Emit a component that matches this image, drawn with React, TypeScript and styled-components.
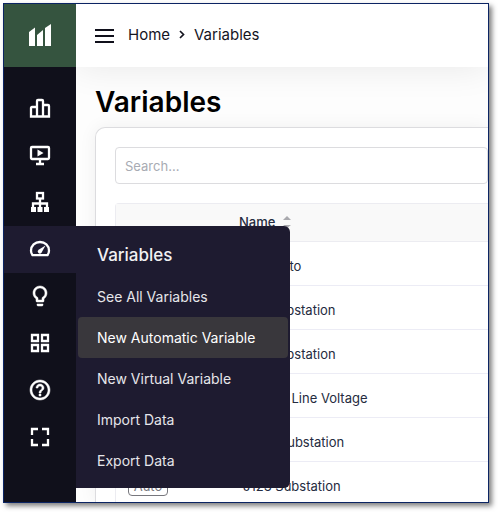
import React from "react";
import styled, { createGlobalStyle, css } from "styled-components";
import { MdHelpOutline, MdLightbulbOutline } from "react-icons/md";

const GlobalStyle = createGlobalStyle`
  *, *::before, *::after { box-sizing: border-box; }
  body { margin: 0; background: #fff; font-family: Inter, "Liberation Sans", sans-serif; }
`;

const Page = styled.div`
  height: 100vh;
  padding: 3px 9px 9px 3px;
  overflow: hidden;
`;

const Frame = styled.div`
  display: flex;
  height: 100%;
  border: 1px solid #0b2463;
  box-shadow: 3px 3px 5px rgba(0, 0, 0, 0.5);
  background: #fdfdfd;
`;

const Sidebar = styled.aside`
  position: relative;
  z-index: 2;
  flex: 0 0 72px;
  background: #10101b;
`;

const Logo = styled.a`
  display: flex;
  align-items: center;
  justify-content: center;
  height: 63px;
  margin-bottom: 18px;
  background: #35543f;
`;

const NavItem = styled.div`
  position: relative;
`;

const NavButton = styled.button<{ $active?: boolean }>`
  display: flex;
  align-items: center;
  justify-content: center;
  width: 100%;
  height: 47px;
  padding: 0 1px 2px 0;
  border: 0;
  color: #fff;
  background: ${(p) => (p.$active ? "#1e1b30" : "transparent")};
  cursor: pointer;

  svg { display: block; width: 24px; height: 24px; stroke-width: 0.5; }
  svg > path[fill="none"] { stroke: none; }
`;

const Menu = styled.div`
  position: absolute;
  top: 0;
  left: 100%;
  width: 214px;
  padding: 0 2px 7px;
  border-radius: 0 6px 6px 0;
  background: #1e1b30;
`;

const MenuTitle = styled.h2`
  margin: 0;
  padding: 17px 19px 9px;
  font-size: 17px;
  line-height: 24px;
  font-weight: 500;
  color: #f1f1f3;
`;

const MenuLink = styled.a<{ $active?: boolean }>`
  display: block;
  padding: 0 19px;
  border-radius: 4px;
  font-size: 14px;
  line-height: 41px;
  color: #e6e6ea;
  text-decoration: none;
  white-space: nowrap;
  ${(p) => p.$active && css`
    background: #39373c;
    color: #fff;
  `}
`;

const Content = styled.div`
  display: flex;
  flex-direction: column;
  flex: 1;
  min-width: 0;
  overflow: hidden;
`;

const Header = styled.header`
  position: relative;
  display: flex;
  align-items: center;
  flex: 0 0 63px;
  padding-left: 19px;
  gap: 14px;
  background: #fff;
  box-shadow: 0 0 36px rgba(0, 0, 0, 0.09);
`;

const MenuToggle = styled.button`
  padding: 0;
  border: 0;
  background: none;
  color: #10101b;
  cursor: pointer;

  svg { display: block; }
`;

const Breadcrumb = styled.nav`
  display: flex;
  align-items: center;
  gap: 8px;
  padding-bottom: 2px;
  font-size: 15px;
  line-height: 20px;
  color: #14141f;

  a { color: inherit; text-decoration: none; }
`;

const Main = styled.main`
  display: flex;
  flex-direction: column;
  flex: 1;
  min-height: 0;
  padding: 17px 0 0 19px;
`;

const Title = styled.h1`
  margin: 0 0 7px;
  font-size: 28px;
  line-height: 36px;
  font-weight: 600;
  color: #000;
`;

const Card = styled.section`
  flex: 1;
  min-height: 0;
  padding: 19px 0 0 19px;
  border: solid #dcdcdf;
  border-width: 1px 0 0 1px;
  border-top-left-radius: 10px;
  background: #fff;
  box-shadow: 0 0 18px rgba(0, 0, 0, 0.06);
`;

const Search = styled.input`
  display: block;
  width: 100%;
  height: 37px;
  margin: 0 0 19px;
  padding: 0 9px;
  border: 1px solid #dcdcdf;
  border-radius: 4px;
  font: 13px/20px Inter, "Liberation Sans", sans-serif;
  background: #fff;

  &::placeholder { color: #a8abb3; opacity: 1; }
`;

const Table = styled.table`
  width: 100%;
  border: solid #ececf1;
  border-width: 1px 0 0 1px;
  border-top-left-radius: 4px;
  border-collapse: separate;
  border-spacing: 0;
  table-layout: fixed;
  font-size: 13px;
  line-height: 20px;
  color: #252b40;
`;

const HeadCell = styled.th<{ $narrow?: boolean }>`
  width: ${(p) => (p.$narrow ? "115px" : "auto")};
  height: 38px;
  padding: 0 8px 2px;
  border-bottom: 1px solid #ececf1;
  background: #f9f9f9;
  font-weight: 500;
  text-align: left;
`;

const SortButton = styled.button`
  display: flex;
  align-items: center;
  gap: 8px;
  padding: 0;
  border: 0;
  background: none;
  font: inherit;
  color: inherit;
  cursor: pointer;
`;

const Cell = styled.td`
  height: 44px;
  padding: 4px 12px 0;
  border-bottom: 1px solid #ececf5;
  white-space: nowrap;
`;

const Badge = styled.span`
  display: block;
  width: 40px;
  border: 1px solid #77777d;
  border-radius: 4px;
  font-size: 13px;
  line-height: 18px;
  text-align: center;
  color: #77777d;
`;

const Drawing = styled.svg`
  && { stroke-width: 2.3; }
`;

const Icon = ({ children }: { children: React.ReactNode }) => (
  <Drawing viewBox="0 0 24 24" fill="none" stroke="currentColor" aria-hidden="true">
    {children}
  </Drawing>
);

const navItems = [
  {
    label: "Dashboards",
    icon: (
      <Icon>
        <path d="M9 20.5V5Q9 4 10 4h4Q15 4 15 5v15.500M9 11H4Q3 11 3 12v8.500h18V10Q21 9 20 9H15" />
      </Icon>
    ),
  },
  {
    label: "Presentations",
    icon: (
      <Icon>
        <rect x="3" y="4" width="18" height="12" rx="1" />
        <path d="M12 16v5M8 21h8" />
        <path d="M9.500 6.500v7L15.500 10z" fill="currentColor" stroke="none" />
      </Icon>
    ),
  },
  {
    label: "Organizations",
    icon: (
      <Icon>
        <rect x="9" y="3" width="6" height="5.500" />
        <path d="M12 8.500V18M5 18v-4.500h14V18" />
        <path d="M3 17h5v5H3zM9.500 17h5v5h-5zM16 17h5v5h-5z" fill="currentColor" stroke="none" />
      </Icon>
    ),
  },
  {
    label: "Variables",
    icon: (
      <Icon>
        <path d="M4.500 18.200Q3 16 3 13.700C3 8.600 7 5 12 5s9 3.600 9 8.700q0 2.300-1.500 4.500z" strokeLinejoin="round" />
        <path d="M17.500 8.500l-4 7.300a2.100 2.100 0 1 1-2.900-3z" fill="currentColor" stroke="none" />
      </Icon>
    ),
  },
  { label: "Insights", icon: <MdLightbulbOutline /> },
  {
    label: "Applications",
    icon: (
      <Icon>
        <path d="M4 4h6v6H4zM14 4h6v6h-6zM4 14h6v6H4zM14 14h6v6h-6z" />
      </Icon>
    ),
  },
  { label: "Help", icon: <MdHelpOutline /> },
  {
    label: "Full screen",
    icon: (
      <Icon>
        <path d="M4 10V4h6M14 4h6v6M20 14v6h-6M10 20H4v-6" />
      </Icon>
    ),
  },
];

const menuLinks = ["See All Variables", "New Automatic Variable", "New Virtual Variable", "Import Data", "Export Data"];

const rows = ["Test Auto", "J20 Substation", "J30 Substation", "J121 L2 Line Voltage", "J400 Substation", "J123 Substation"];

export default function App() {
  return (
    <Page>
      <GlobalStyle />
      <Frame>
        <Sidebar>
          <Logo href="#" aria-label="Main page">
            <svg width="24" height="24" viewBox="0 0 24 24" fill="#fff" aria-hidden="true">
              <path d="M1 8l6-4.500V22H1zM9 11l6-5v16H9zM17 4l6-4v22h-6z" />
            </svg>
          </Logo>
          {navItems.map(({ label, icon }) => (
            <NavItem key={label}>
              <NavButton aria-label={label} $active={label === "Variables"}>{icon}</NavButton>
              {label === "Variables" && (
                <Menu>
                  <MenuTitle>Variables</MenuTitle>
                  {menuLinks.map((link) => (
                    <MenuLink key={link} href="#" $active={link === "New Automatic Variable"}>{link}</MenuLink>
                  ))}
                </Menu>
              )}
            </NavItem>
          ))}
        </Sidebar>
        <Content>
          <Header>
            <MenuToggle aria-label="Toggle menu">
              <svg width="19" height="14" viewBox="0 0 19 14" fill="currentColor">
                <path d="M0 0h19v2H0zM0 6h19v2H0zM0 12h19v2H0z" />
              </svg>
            </MenuToggle>
            <Breadcrumb aria-label="Breadcrumb">
              <a href="#">Home</a>
              <svg width="8" height="10" viewBox="0 0 8 10" fill="none" stroke="currentColor" strokeWidth="1.700" aria-hidden="true">
                <path d="M2 1l3.500 3.500L2 8" />
              </svg>
              <span>Variables</span>
            </Breadcrumb>
          </Header>
          <Main>
            <Title>Variables</Title>
            <Card>
              <Search type="search" placeholder="Search..." aria-label="Search variables" />
              <Table>
                <thead>
                  <tr>
                    <HeadCell $narrow aria-label="Type" />
                    <HeadCell>
                      <SortButton>
                        Name
                        <svg width="8" height="12" viewBox="0 0 8 12" fill="#a9a9ae" aria-hidden="true">
                          <path d="M0 4l4-4 4 4zM0 9h8l-4 3z" />
                        </svg>
                      </SortButton>
                    </HeadCell>
                  </tr>
                </thead>
                <tbody>
                  {rows.map((name) => (
                    <tr key={name}>
                      <Cell><Badge>Auto</Badge></Cell>
                      <Cell>{name}</Cell>
                    </tr>
                  ))}
                </tbody>
              </Table>
            </Card>
          </Main>
        </Content>
      </Frame>
    </Page>
  );
}
